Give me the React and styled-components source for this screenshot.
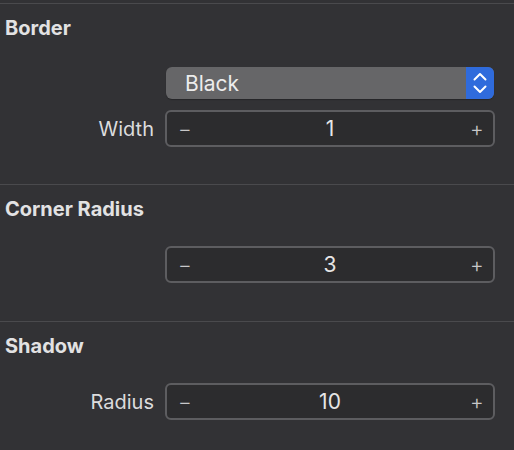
import styled, { createGlobalStyle } from 'styled-components'

const Global = createGlobalStyle`
  html, body {
    margin: 0;
    padding: 0;
    background: #323235;
  }
  body {
    font-family: Inter, "Noto Sans", sans-serif;
    color: #dfdfe0;
  }
`

const Panel = styled.div`
  width: 514px;
  height: 450px;
  padding-top: 3px;
  box-sizing: border-box;
  background: #323235;
  overflow: hidden;
`

const Section = styled.section`
  border-top: 1px solid #4a4a4d;
  padding: 12px 0 ${props => props.$tail || 38}px;
`

const Heading = styled.h2`
  margin: 0 0 ${props => props.$gap || 25}px 5px;
  font-size: 20px;
  line-height: 24px;
  font-weight: 700;
  color: #e2e2e3;
`

const Rows = styled.div`
  display: flex;
  flex-direction: column;
  gap: 11px;
`

const Row = styled.div`
  display: grid;
  grid-template-columns: 154px 330px;
  column-gap: 11px;
  align-items: center;
`

const Label = styled.span`
  text-align: right;
  font-size: 20px;
  color: #dcdcdd;
`

const Popup = styled.div`
  margin: 0 1px;
  height: 32px;
  display: flex;
  align-items: center;
  background: #666668;
  border-radius: 6px;
  overflow: hidden;
  box-shadow: 0 1px 1px rgba(0, 0, 0, 0.25);
`

const PopupText = styled.span`
  flex: 1;
  padding-left: 19px;
  font-size: 21px;
  color: #ececec;
`

const PopupArrows = styled.div`
  width: 28px;
  height: 100%;
  display: flex;
  align-items: center;
  justify-content: center;
  background: #2f6bdc;
`

const Stepper = styled.div`
  height: 37px;
  box-sizing: border-box;
  display: flex;
  align-items: center;
  padding: 0 11px;
  border: 2px solid #5d5d60;
  border-radius: 6px;
  background: #2c2c2e;
`

const StepSign = styled.span`
  width: 12px;
  text-align: center;
  font-size: 21px;
  font-weight: 300;
  color: #c8c8c9;
`

const Value = styled.span`
  flex: 1;
  text-align: center;
  font-size: 21px;
  color: #e6e6e6;
`

function Chevrons() {
  return (
    <svg width="14" height="22" viewBox="0 0 14 22" fill="none" stroke="#fff" strokeWidth="2" strokeLinecap="round" strokeLinejoin="round">
      <path d="M1.5 7.5 L7 2 L12.5 7.5" />
      <path d="M1.5 14.5 L7 20 L12.5 14.5" />
    </svg>
  )
}

function NumberStepper({ value }) {
  return (
    <Stepper>
      <StepSign>−</StepSign>
      <Value>{value}</Value>
      <StepSign>+</StepSign>
    </Stepper>
  )
}

export default function App() {
  return (
    <>
      <Global />
      <Panel>
        <Section $tail={37}>
          <Heading $gap={27}>Border</Heading>
          <Rows>
            <Row>
              <Label />
              <Popup>
                <PopupText>Black</PopupText>
                <PopupArrows><Chevrons /></PopupArrows>
              </Popup>
            </Row>
            <Row>
              <Label>Width</Label>
              <NumberStepper value="1" />
            </Row>
          </Rows>
        </Section>
        <Section>
          <Heading>Corner Radius</Heading>
          <Rows>
            <Row>
              <Label />
              <NumberStepper value="3" />
            </Row>
          </Rows>
        </Section>
        <Section>
          <Heading>Shadow</Heading>
          <Rows>
            <Row>
              <Label>Radius</Label>
              <NumberStepper value="10" />
            </Row>
          </Rows>
        </Section>
      </Panel>
    </>
  )
}
